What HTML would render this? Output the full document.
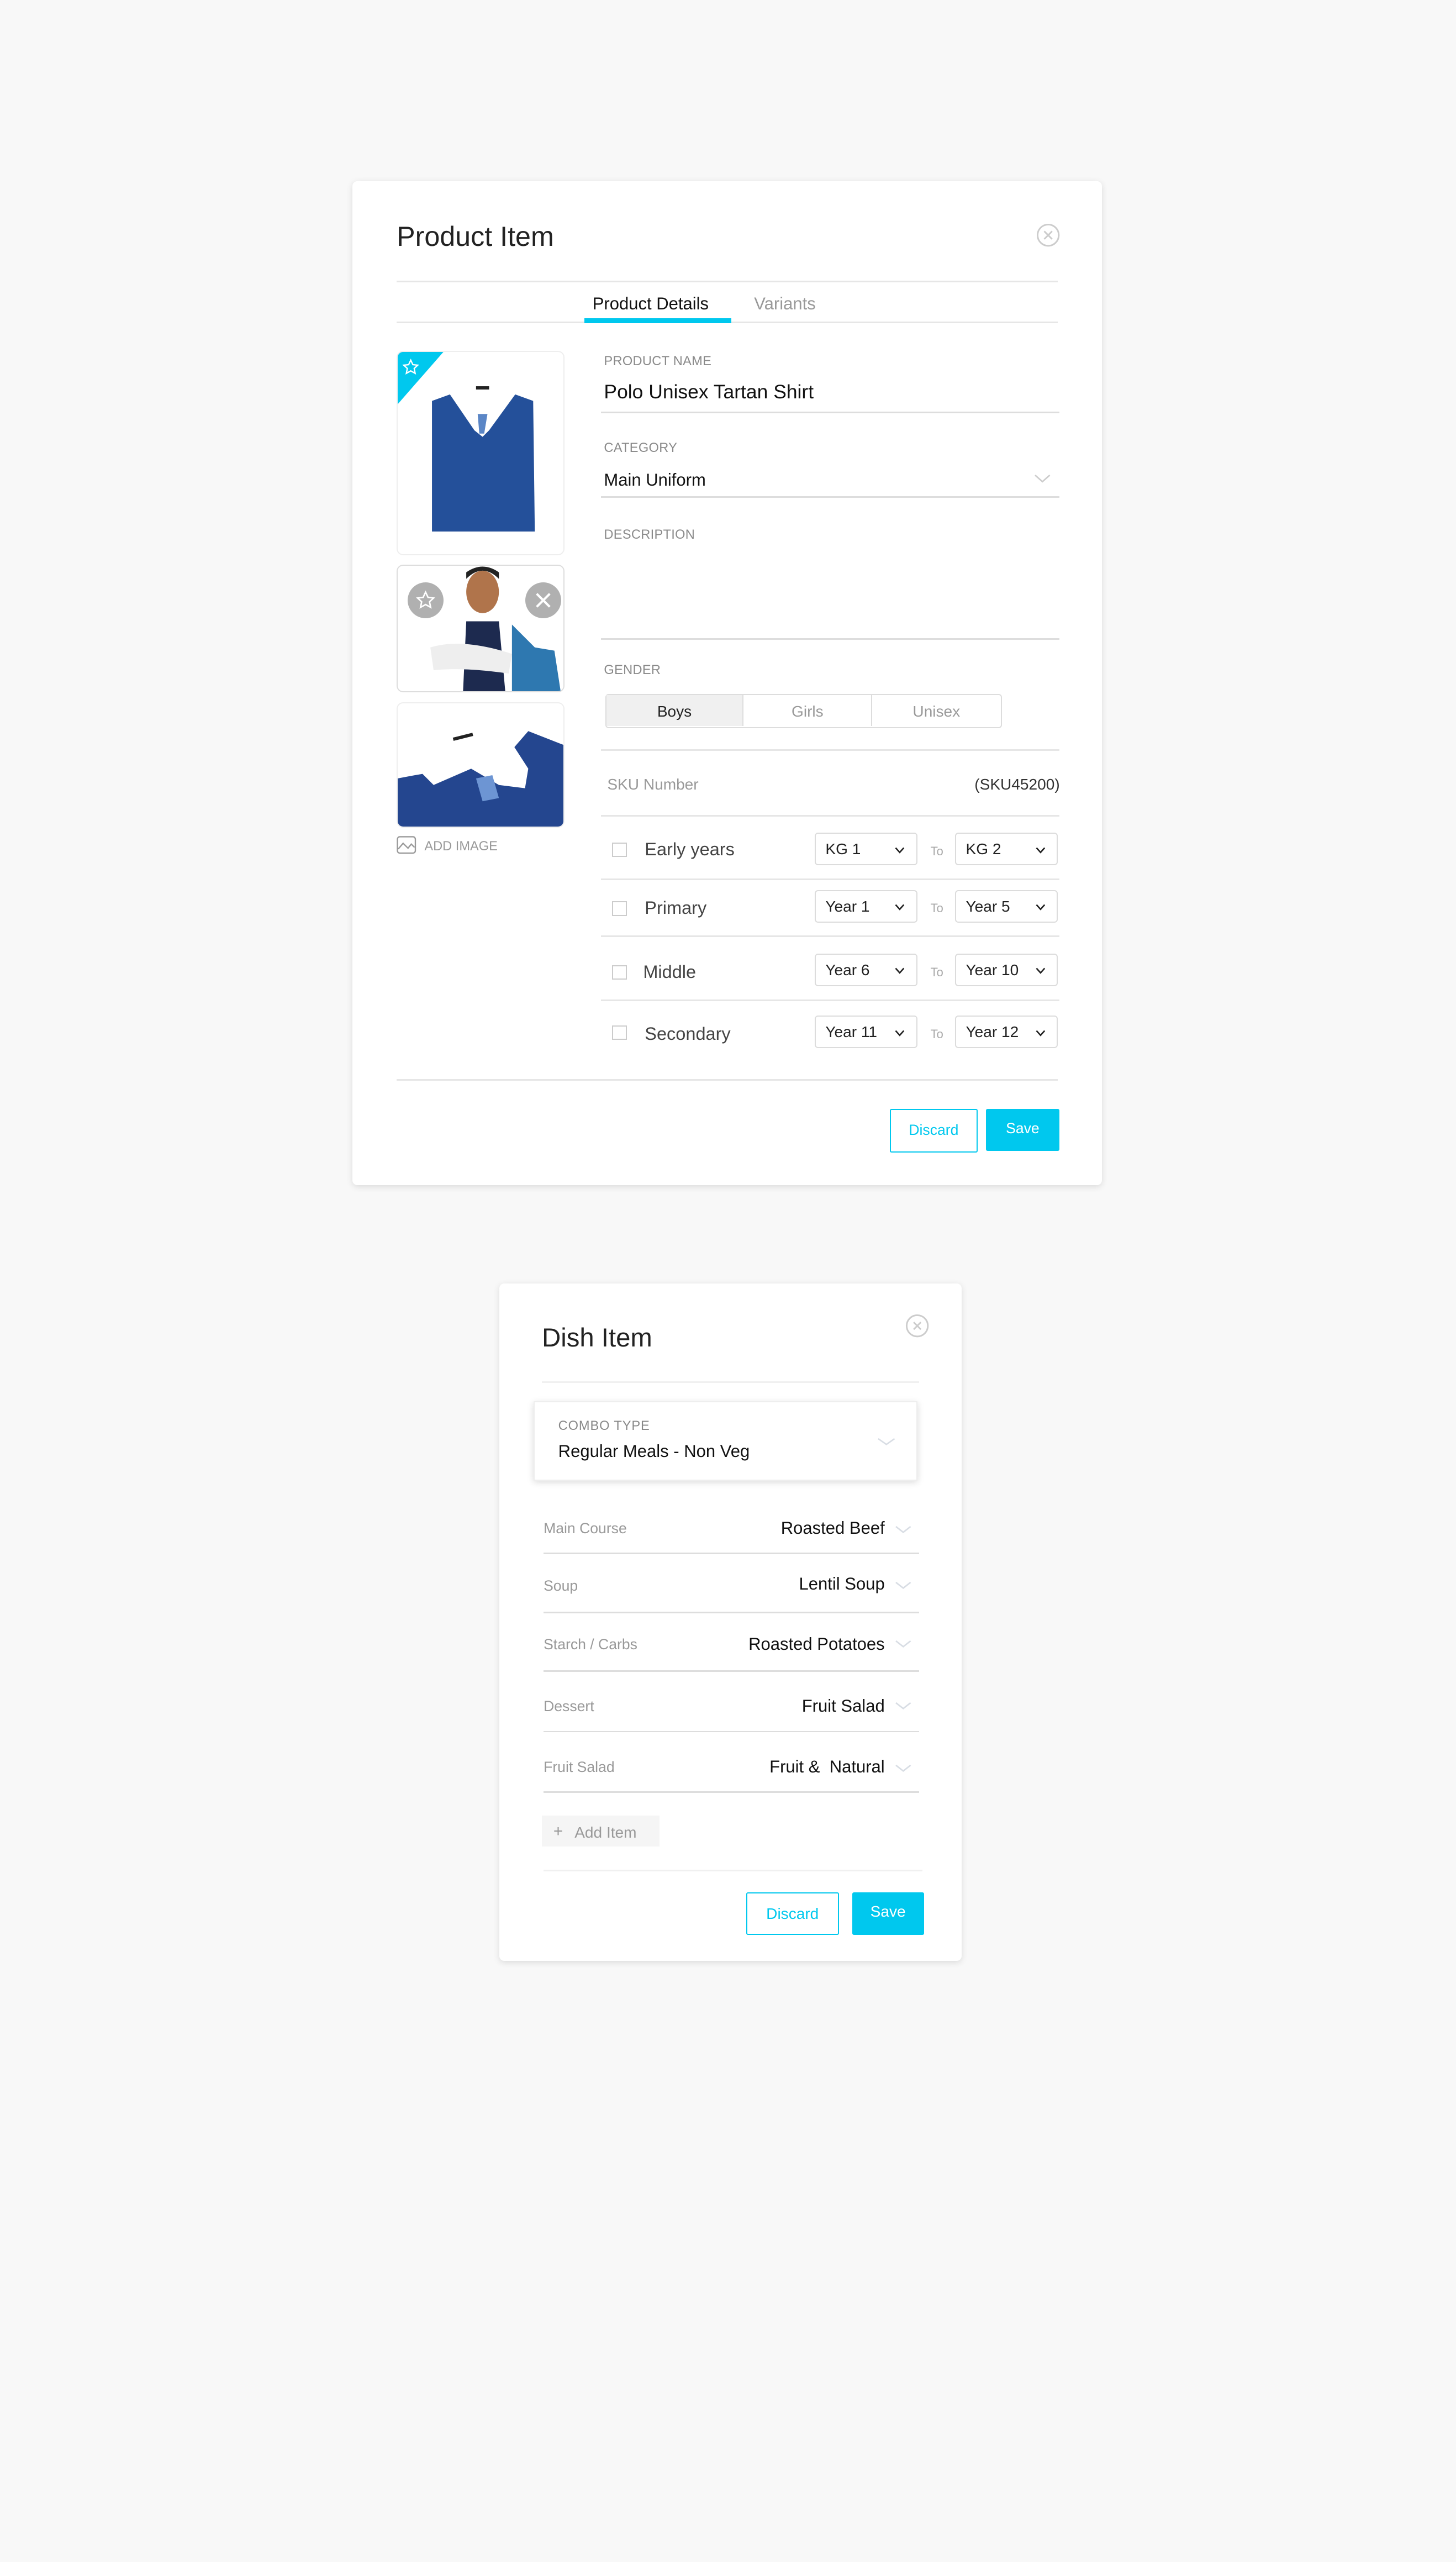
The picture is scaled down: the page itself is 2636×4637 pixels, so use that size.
<!DOCTYPE html>
<html><head><meta charset="utf-8">
<style>
html,body{margin:0;padding:0;background:#f8f8f8;}
body{width:2636px;height:4636px;overflow:hidden;}
#z{zoom:2.9552;position:relative;width:892px;height:1569px;font-family:"Liberation Sans",sans-serif;}
.a{position:absolute;}
.card{position:absolute;background:#fff;border-radius:3px;box-shadow:0 1px 4px rgba(0,0,0,0.12);}
.ln{position:absolute;height:1px;background:#e6e6e6;}
.lbl{position:absolute;font-size:8px;color:#8a8a8a;letter-spacing:0.1px;margin-top:1px;}
.t{position:absolute;white-space:nowrap;margin-top:1px;}
.sel{position:absolute;width:63px;height:20px;border:1px solid #dcdcdc;border-radius:2px;box-sizing:border-box;font-size:9.5px;color:#222;line-height:19px;padding-left:6px;}
.sel svg{position:absolute;right:7px;top:8px;}
.cb{position:absolute;width:9px;height:9px;border:1px solid #ccc;box-sizing:border-box;}
.to{position:absolute;font-size:7.5px;color:#aaa;margin-top:1px;}
.rl{position:absolute;font-size:11px;color:#444;margin-top:1px;}
.dl{position:absolute;font-size:9px;color:#999;margin-top:1px;}
.dv{position:absolute;font-size:10.5px;color:#111;text-align:right;right:0;white-space:nowrap;margin-top:1px;}
</style></head><body><div id="z">

<!-- Product card -->
<div class="card" style="left:216px;top:111px;width:459px;height:615px;"></div>
<div class="t" style="left:243px;top:134px;font-size:17px;color:#222;">Product Item</div>
<svg class="a" style="left:634px;top:136px" width="16" height="16" viewBox="0 0 16 16"><circle cx="8" cy="8" r="6.5" fill="none" stroke="#ccc" stroke-width="1"/><path d="M5.6 5.6L10.4 10.4M10.4 5.6L5.6 10.4" stroke="#ccc" stroke-width="1"/></svg>
<div class="ln" style="left:243px;top:172px;width:405px;"></div>
<div class="t" style="left:363px;top:179px;font-size:10.5px;color:#111;">Product Details</div>
<div class="t" style="left:462px;top:179px;font-size:10.5px;color:#999;">Variants</div>
<div class="ln" style="left:243px;top:197px;width:405px;"></div>
<div class="a" style="left:358px;top:195px;width:90px;height:3px;background:#00c8ee;"></div>

<!-- images -->
<div class="a" style="left:243px;top:215px;width:103px;height:125px;border:1px solid #eee;border-radius:4px;box-sizing:border-box;overflow:hidden;background:#fff;">
<svg width="103" height="125" viewBox="0 0 103 125"><path d="M0 0H28L0 32Z" fill="#00c8ee"/><path d="M8 5l1.3 2.8 3 .3-2.2 2 .6 3-2.7-1.5-2.7 1.5.6-3-2.2-2 3-.3z" fill="none" stroke="#fff" stroke-width=".8"/>
<path d="M21 30 L32 26 L72 26 L83 30 L84 110 L21 110Z" fill="#24509a"/><path d="M33 14 Q52 10 72 14 L72 26 L56 48 L52 52 L47 48 L32 26Z" fill="#fff"/><path d="M49 38L55 38L53 50L50 50Z" fill="#5b86c6"/><rect x="48" y="21" width="8" height="2" fill="#222"/></svg></div>
<div class="a" style="left:243px;top:346px;width:103px;height:78px;border:1px solid #ddd;border-radius:4px;box-sizing:border-box;overflow:hidden;background:#fff;">
<svg width="103" height="78" viewBox="0 0 103 78"><ellipse cx="52" cy="16" rx="10" ry="13" fill="#b0744b"/><path d="M42 8 Q52 -2 62 8 L62 4 Q52 -3 42 4Z" fill="#222"/><path d="M34 36 Q52 26 72 34 L78 78 L30 78Z" fill="#fff"/><path d="M42 34 L62 34 L66 78 L40 78Z" fill="#1d2a4f"/><path d="M20 50 Q40 44 70 54 L68 66 Q40 62 22 64Z" fill="#eee"/><path d="M70 36 L84 50 L96 52 L100 78 L70 78Z" fill="#2e78b0"/></svg>
<div class="a" style="left:6px;top:10px;width:22px;height:22px;border-radius:50%;background:#b0b0b0;"><svg width="22" height="22" viewBox="0 0 22 22"><path d="M11 6l1.5 3.2 3.4.4-2.5 2.3.7 3.4-3.1-1.7-3.1 1.7.7-3.4-2.5-2.3 3.4-.4z" fill="none" stroke="#fff" stroke-width=".9"/></svg></div>
<div class="a" style="left:78px;top:10px;width:22px;height:22px;border-radius:50%;background:#b0b0b0;"><svg width="22" height="22" viewBox="0 0 22 22"><path d="M7 7L15 15M15 7L7 15" stroke="#fff" stroke-width="1.4"/></svg></div></div>
<div class="a" style="left:243px;top:430px;width:103px;height:77px;border:1px solid #eee;border-radius:4px;box-sizing:border-box;overflow:hidden;background:#fff;">
<svg width="103" height="77" viewBox="0 0 103 77"><path d="M0 46 Q40 38 60 40 L80 17 L103 26 L103 77 L0 77Z" fill="#24468f"/><path d="M12 15 Q40 8 60 9 L80 40 L78 52 L62 50 L45 40 L22 50 L12 40Z" fill="#fff"/><path d="M48 46 L58 44 L62 58 L52 60Z" fill="#6d95d3"/><path d="M34 22L46 19" stroke="#222" stroke-width="2"/></svg></div>
<svg class="a" style="left:243px;top:512px" width="12" height="11" viewBox="0 0 12 11"><rect x=".5" y=".5" width="11" height="10" rx="1.5" fill="none" stroke="#999" stroke-width=".8"/><path d="M1 8L4 4.5 7 7.5 9 5 11 7" fill="none" stroke="#999" stroke-width=".8"/></svg>
<div class="t" style="left:260px;top:513px;font-size:8px;color:#999;">ADD IMAGE</div>

<!-- right column -->
<div class="lbl" style="left:370px;top:216px;">PRODUCT NAME</div>
<div class="t" style="left:370px;top:232px;font-size:12px;color:#111;">Polo Unisex Tartan Shirt</div>
<div class="ln" style="left:368px;top:252px;width:281px;background:#ddd;"></div>
<div class="lbl" style="left:370px;top:269px;">CATEGORY</div>
<div class="t" style="left:370px;top:287px;font-size:10.5px;color:#111;">Main Uniform</div>
<svg class="a" style="left:633px;top:290px" width="11" height="7" viewBox="0 0 11 7"><path d="M1 1L5.5 5 10 1" fill="none" stroke="#ccc" stroke-width=".9"/></svg>
<div class="ln" style="left:368px;top:304px;width:281px;background:#ddd;"></div>
<div class="lbl" style="left:370px;top:322px;">DESCRIPTION</div>
<div class="ln" style="left:368px;top:391px;width:281px;background:#ddd;"></div>
<div class="lbl" style="left:370px;top:405px;">GENDER</div>
<div class="a" style="left:371px;top:425px;width:243px;height:21px;border:1px solid #ddd;border-radius:2px;box-sizing:border-box;font-size:9.5px;">
<div class="a" style="left:0;top:0;width:83px;height:19px;background:#f0f0f0;border-right:1px solid #ddd;text-align:center;line-height:20px;color:#222;">Boys</div>
<div class="a" style="left:84px;top:0;width:78px;height:19px;border-right:1px solid #ddd;text-align:center;line-height:20px;color:#999;">Girls</div>
<div class="a" style="left:163px;top:0;width:78px;height:19px;text-align:center;line-height:20px;color:#999;">Unisex</div></div>
<div class="ln" style="left:368px;top:459px;width:281px;"></div>
<div class="t" style="left:372px;top:474px;font-size:9.5px;color:#999;">SKU Number</div>
<div class="t" style="left:597px;top:474px;font-size:9.5px;color:#333;">(SKU45200)</div>
<div class="ln" style="left:368px;top:499px;width:281px;"></div>

<div class="cb" style="left:375px;top:516px;"></div><div class="rl" style="left:395px;top:513px;">Early years</div>
<div class="sel" style="left:499px;top:510px;">KG 1<svg width="6" height="4" viewBox="0 0 6 4"><path d="M.5.5L3 3.3 5.5.5" fill="none" stroke="#222" stroke-width=".9"/></svg></div>
<div class="to" style="left:570px;top:516px;">To</div>
<div class="sel" style="left:585px;top:510px;">KG 2<svg width="6" height="4" viewBox="0 0 6 4"><path d="M.5.5L3 3.3 5.5.5" fill="none" stroke="#222" stroke-width=".9"/></svg></div>
<div class="ln" style="left:368px;top:538px;width:281px;"></div>

<div class="cb" style="left:375px;top:552px;"></div><div class="rl" style="left:395px;top:549px;">Primary</div>
<div class="sel" style="left:499px;top:545px;">Year 1<svg width="6" height="4" viewBox="0 0 6 4"><path d="M.5.5L3 3.3 5.5.5" fill="none" stroke="#222" stroke-width=".9"/></svg></div>
<div class="to" style="left:570px;top:551px;">To</div>
<div class="sel" style="left:585px;top:545px;">Year 5<svg width="6" height="4" viewBox="0 0 6 4"><path d="M.5.5L3 3.3 5.5.5" fill="none" stroke="#222" stroke-width=".9"/></svg></div>
<div class="ln" style="left:368px;top:573px;width:281px;"></div>

<div class="cb" style="left:375px;top:591px;"></div><div class="rl" style="left:394px;top:588px;">Middle</div>
<div class="sel" style="left:499px;top:584px;">Year 6<svg width="6" height="4" viewBox="0 0 6 4"><path d="M.5.5L3 3.3 5.5.5" fill="none" stroke="#222" stroke-width=".9"/></svg></div>
<div class="to" style="left:570px;top:590px;">To</div>
<div class="sel" style="left:585px;top:584px;">Year 10<svg width="6" height="4" viewBox="0 0 6 4"><path d="M.5.5L3 3.3 5.5.5" fill="none" stroke="#222" stroke-width=".9"/></svg></div>
<div class="ln" style="left:368px;top:612px;width:281px;"></div>

<div class="cb" style="left:375px;top:628px;"></div><div class="rl" style="left:395px;top:626px;">Secondary</div>
<div class="sel" style="left:499px;top:622px;">Year 11<svg width="6" height="4" viewBox="0 0 6 4"><path d="M.5.5L3 3.3 5.5.5" fill="none" stroke="#222" stroke-width=".9"/></svg></div>
<div class="to" style="left:570px;top:628px;">To</div>
<div class="sel" style="left:585px;top:622px;">Year 12<svg width="6" height="4" viewBox="0 0 6 4"><path d="M.5.5L3 3.3 5.5.5" fill="none" stroke="#222" stroke-width=".9"/></svg></div>

<div class="ln" style="left:243px;top:661px;width:405px;"></div>
<div class="a" style="left:545px;top:679px;width:54px;height:27px;border:1px solid #00c8ee;box-sizing:border-box;border-radius:1px;color:#00c8ee;font-size:9px;text-align:center;line-height:25px;">Discard</div>
<div class="a" style="left:604px;top:679px;width:45px;height:26px;background:#00c8ee;border-radius:1px;color:#fff;font-size:9px;text-align:center;line-height:24px;">Save</div>

<!-- Dish card -->
<div class="card" style="left:306px;top:786px;width:283px;height:415px;"></div>
<div class="t" style="left:332px;top:809px;font-size:16px;color:#222;">Dish Item</div>
<svg class="a" style="left:554px;top:804px" width="16" height="16" viewBox="0 0 16 16"><circle cx="8" cy="8" r="6.5" fill="none" stroke="#ccc" stroke-width="1"/><path d="M5.8 5.8L10.2 10.2M10.2 5.8L5.8 10.2" stroke="#ccc" stroke-width="1"/></svg>
<div class="ln" style="left:332px;top:846px;width:231px;background:#f0f0f0;"></div>
<div class="a" style="left:327px;top:858px;width:235px;height:49px;background:#fff;box-shadow:0 1px 4px rgba(0,0,0,0.15);border:1px solid #eee;box-sizing:border-box;"></div>
<div class="t" style="left:342px;top:868px;font-size:8px;color:#888;letter-spacing:.3px;">COMBO TYPE</div>
<div class="t" style="left:342px;top:882px;font-size:10.5px;color:#111;">Regular Meals - Non Veg</div>
<svg class="a" style="left:537px;top:880px" width="12" height="6" viewBox="0 0 12 6"><path d="M1 1L6 4.5 11 1" fill="none" stroke="#d8dde4" stroke-width=".9"/></svg>

<div class="dl" style="left:333px;top:930px;">Main Course</div>
<div class="a" style="left:333px;top:928px;width:209px;"><div class="dv" style="top:1px;">Roasted Beef</div></div>
<div class="ln" style="left:333px;top:951px;width:230px;background:#ddd;"></div>
<div class="dl" style="left:333px;top:965px;">Soup</div>
<div class="a" style="left:333px;top:963px;width:209px;"><div class="dv" style="top:0;">Lentil Soup</div></div>
<div class="ln" style="left:333px;top:987px;width:230px;background:#ddd;"></div>
<div class="dl" style="left:333px;top:1001px;">Starch / Carbs</div>
<div class="a" style="left:333px;top:999px;width:209px;"><div class="dv" style="top:1px;">Roasted Potatoes</div></div>
<div class="ln" style="left:333px;top:1023px;width:230px;background:#ddd;"></div>
<div class="dl" style="left:333px;top:1039px;">Dessert</div>
<div class="a" style="left:333px;top:1037px;width:209px;"><div class="dv" style="top:1px;">Fruit Salad</div></div>
<div class="ln" style="left:333px;top:1060px;width:230px;background:#ddd;"></div>
<div class="dl" style="left:333px;top:1076px;">Fruit Salad</div>
<div class="a" style="left:333px;top:1074px;width:209px;"><div class="dv" style="top:1px;">Fruit &amp;&nbsp; Natural</div></div>
<div class="ln" style="left:333px;top:1097px;width:230px;background:#ddd;"></div>
<svg class="a" style="left:548px;top:934px" width="11" height="6" viewBox="0 0 11 6"><path d="M1 1L5.5 4.5 10 1" fill="none" stroke="#d8dde4" stroke-width=".9"/></svg>
<svg class="a" style="left:548px;top:968px" width="11" height="6" viewBox="0 0 11 6"><path d="M1 1L5.5 4.5 10 1" fill="none" stroke="#d8dde4" stroke-width=".9"/></svg>
<svg class="a" style="left:548px;top:1004px" width="11" height="6" viewBox="0 0 11 6"><path d="M1 1L5.5 4.5 10 1" fill="none" stroke="#d8dde4" stroke-width=".9"/></svg>
<svg class="a" style="left:548px;top:1042px" width="11" height="6" viewBox="0 0 11 6"><path d="M1 1L5.5 4.5 10 1" fill="none" stroke="#d8dde4" stroke-width=".9"/></svg>
<svg class="a" style="left:548px;top:1080px" width="11" height="6" viewBox="0 0 11 6"><path d="M1 1L5.5 4.5 10 1" fill="none" stroke="#d8dde4" stroke-width=".9"/></svg>

<div class="a" style="left:332px;top:1112px;width:72px;height:19px;background:#f5f5f5;"></div>
<div class="t" style="left:339px;top:1115px;font-size:10px;color:#999;">+</div>
<div class="t" style="left:352px;top:1116px;font-size:9.5px;color:#999;">Add Item</div>
<div class="ln" style="left:333px;top:1145px;width:232px;background:#f0f0f0;"></div>
<div class="a" style="left:457px;top:1159px;width:57px;height:26px;border:1px solid #00c8ee;box-sizing:border-box;border-radius:1px;color:#00c8ee;font-size:9.5px;text-align:center;line-height:25px;">Discard</div>
<div class="a" style="left:522px;top:1159px;width:44px;height:26px;background:#00c8ee;border-radius:1px;color:#fff;font-size:9.5px;text-align:center;line-height:24px;">Save</div>

</div></body></html>
